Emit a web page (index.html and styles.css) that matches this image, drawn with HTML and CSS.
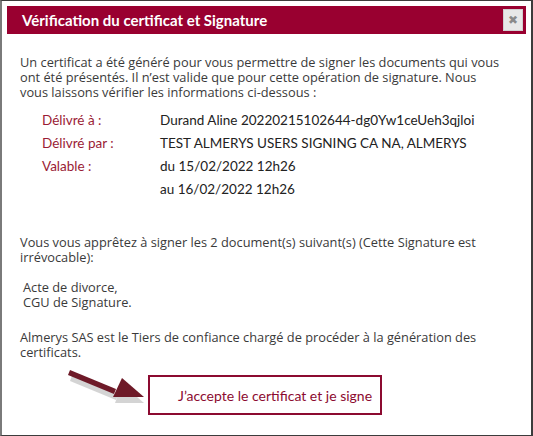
FILE: index.html
```html
<!DOCTYPE html>
<html lang="fr">
<head>
    <meta charset="UTF-8">
    <meta name="viewport" content="width=device-width, initial-scale=1.0">
    <title>Vérification du certificat et Signature</title>
    <link rel="stylesheet" href="styles.css">
</head>
<body>
    <div class="dialog">
        <div class="dialog-title">
            <span>Vérification du certificat et Signature</span>
            <button class="close-button" title="Fermer">&#x2716;</button>
        </div>

        <div class="dialog-body">
            <p class="intro">
                Un certificat a été généré pour vous permettre de signer les documents qui vous
                ont été présentés. Il n’est valide que pour cette opération de signature. Nous
                vous laissons vérifier les informations ci-dessous :
            </p>

            <div class="cert-info">
                <div class="cert-label">Délivré à :</div>
                <div class="cert-value">Durand Aline 20220215102644-dg0Yw1ceUeh3qjloi</div>
                <div class="cert-label">Délivré par :</div>
                <div class="cert-value">TEST ALMERYS USERS SIGNING CA NA, ALMERYS</div>
                <div class="cert-label">Valable :</div>
                <div class="cert-value">du 15/02/2022 12h26</div>
                <div class="cert-label"></div>
                <div class="cert-value">au 16/02/2022 12h26</div>
            </div>

            <p class="docs-intro">
                Vous vous apprêtez à signer les 2 document(s) suivant(s) (Cette Signature est
                irrévocable):
            </p>

            <p class="docs-list">
                Acte de divorce,<br>
                CGU de Signature.
            </p>

            <p class="trust-note">
                Almerys SAS est le Tiers de confiance chargé de procéder à la génération des
                certificats.
            </p>

            <div class="actions">
                <svg class="arrow" width="80" height="46" viewBox="0 0 80 46">
                    <g transform="translate(2,3)" fill="#b9b9b9" opacity="0.6">
                        <path d="M2 5 L48 24 L46 29 L0 10 Z"/>
                        <path d="M52 13 L74 32 L45 32 Z"/>
                    </g>
                    <g fill="#6e1a28">
                        <path d="M2 2 L48 21 L46 26 L0 7 Z"/>
                        <path d="M54 10 L76 29 L45 29 Z"/>
                    </g>
                </svg>
                <button class="accept-button">J’accepte le certificat et je signe</button>
            </div>
        </div>
    </div>
</body>
</html>
```

FILE: styles.css
```css
body {
    margin: 0;
    background: white;
}

.dialog {
    box-sizing: border-box;
    width: 533px;
    height: 436px;
    padding: 5px 5px 0 5px;
    border: 1px solid #3c3c3c;
    border-left: 2px solid #7a7a7a;
    border-right: 2px solid #3c3c3c;
    background: white;
    font-family: "Open Sans", "Noto Sans", sans-serif;
    font-size: 12.8px;
    color: #3a3a3a;
}

.dialog-title {
    display: flex;
    align-items: center;
    justify-content: space-between;
    height: 28px;
    padding: 0 3px 0 15px;
    background: #990030;
    color: white;
    font-family: Lato, "Noto Sans", sans-serif;
    font-weight: bold;
    font-size: 15px;
}

.close-button {
    width: 20px;
    height: 22px;
    padding: 0;
    background: #e8e8e8;
    border: 1px solid #d0d0d0;
    color: #8a8a8a;
    font-size: 12px;
    line-height: 20px;
    cursor: pointer;
}

.dialog-body {
    padding: 0 24px 0 13px;
}

.dialog-body p {
    margin: 0;
    line-height: 15px;
}

.intro {
    margin-top: 21px !important;
}

.cert-info {
    display: grid;
    grid-template-columns: 118px 1fr;
    grid-auto-rows: 23px;
    align-items: center;
    margin: 8px 0 0 22px;
    font-family: Lato, "Noto Sans", sans-serif;
    font-size: 13.5px;
}

.cert-label {
    color: #9a1b35;
}

.cert-value {
    color: #222;
}

.docs-intro {
    margin-top: 35px !important;
}

.docs-list {
    margin-top: 15px !important;
    padding-left: 3px;
}

.trust-note {
    margin-top: 20px !important;
}

.actions {
    display: flex;
    align-items: flex-start;
    margin-top: 12px;
    padding-left: 48px;
}

.arrow {
    display: block;
    margin-top: -4px;
}

.accept-button {
    flex-shrink: 0;
    width: 234px;
    height: 40px;
    margin-top: 3px;
    padding: 0 0 0 28px;
    text-align: left;
    white-space: nowrap;
    background: white;
    border: 2px solid #8c0a30;
    color: #8c0a30;
    font-family: Lato, "Noto Sans", sans-serif;
    font-size: 14px;
    cursor: pointer;
}
```
